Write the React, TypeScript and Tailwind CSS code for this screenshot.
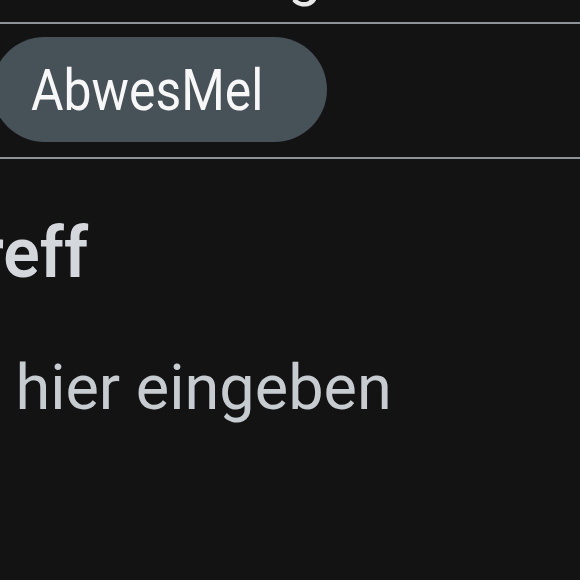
import React from 'react';

const App = () => {
  return (
    <div className="w-[580px] h-[580px] bg-[#131313] overflow-hidden font-['Roboto','Noto_Sans',sans-serif]">
      {/* title row, only the tail of a descender shows */}
      <div className="h-[22px] overflow-hidden">
        <div className="-mt-[56px] ml-[288px] text-[60px] leading-[60px] text-[#e8e8e8]">g</div>
      </div>
      <div className="h-[2px] bg-[#8d9398]" />

      <div className="pt-[13px] pb-[15px]">
        <div className="-ml-[8px] w-[335px] h-[105px] rounded-full bg-[#465158] flex items-center pl-[39px]">
          <span className="inline-block origin-left scale-x-[0.86] text-[58px] leading-none text-[#f7f7f7]">AbwesMel</span>
        </div>
      </div>
      <div className="h-[2px] bg-[#8d9398]" />

      <div className="pt-[54px] whitespace-nowrap">
        <div className="-ml-[123px] origin-left scale-x-[0.97] text-[70px] leading-[80px] font-semibold text-[#d4d8dc]">Betreff</div>
        <div className="mt-[59px] -ml-[120px] text-[63px] leading-[72px] text-[#c7ccd1]">Text hier eingeben</div>
      </div>
    </div>
  );
};

export default App;
